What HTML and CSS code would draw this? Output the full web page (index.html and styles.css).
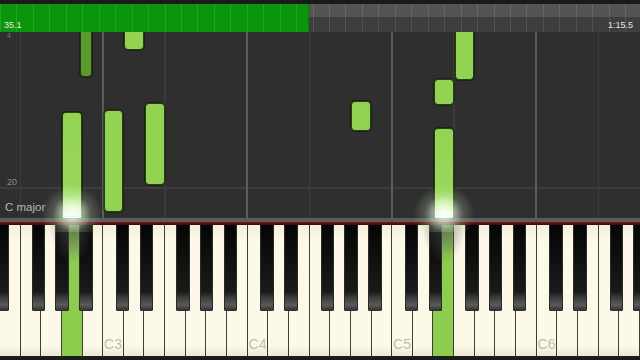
FILE: index.html
```html
<!DOCTYPE html>
<html lang="en">
<head>
  <meta charset="UTF-8">
  <meta name="viewport" content="width=device-width, initial-scale=1.0">
  <title>Piano Roll</title>
  <link rel="stylesheet" href="styles.css">
</head>
<body>
  <div class="screen">
    <div class="progress">
      <span class="time">35.1</span>
      <span class="time">1:15.5</span>
    </div>
    <div class="roll" id="roll">
      <span class="measure measure-top">4</span>
      <span class="measure measure-20">20</span>
      <span class="key-sig">C major</span>
    </div>
    <div class="rail"></div>
    <div class="keyboard" id="keyboard"></div>
  </div>
  <script src="script.js"></script>
</body>
</html>
```

FILE: styles.css
```css
body {
    margin: 0;
    background-color: #2f2f2f;
    font-family: "Liberation Sans", Arial, sans-serif;
}
.screen {
    width: 640px;
    height: 360px;
    display: flex;
    flex-direction: column;
    overflow: hidden;
}

/* song position bar */
.progress {
    box-sizing: border-box;
    height: 32px;
    border-top: 4px solid #1b1b1b;
    padding: 0 7px 2px 4px;
    display: flex;
    align-items: flex-end;
    justify-content: space-between;
    background:
        repeating-linear-gradient(to right, rgba(255, 255, 255, 0.1) 0 1px, transparent 1px 16.45px),
        linear-gradient(to right, #0a960a 0 308px, #087a08 308px 309px, transparent 309px),
        linear-gradient(#545454 0 45%, #3e3e3e 45%);
}
.time {
    font-size: 9px;
    line-height: 10px;
    color: #e6e6e6;
}

/* falling notes */
.roll {
    flex: 1;
    position: relative;
    z-index: 2;
    clip-path: inset(0 0 -40px 0);
    background-color: #2f2f2f;
    background-image:
        repeating-linear-gradient(to right, transparent 0 102px, #5c5c5c 102px 104px, transparent 104px 144.5px),
        repeating-linear-gradient(to right, transparent 0 20px, #3b3b3b 20px 21.5px, transparent 21.5px 144.5px),
        linear-gradient(to bottom, transparent 0 155px, #3d3d3d 155px 157px, transparent 157px);
}
.measure {
    position: absolute;
    left: 7px;
    font-size: 9px;
    color: #8a8a8a;
}
.measure-top {
    top: 0;
    font-size: 7px;
    color: #777;
}
.measure-20 {
    top: 145px;
}
.key-sig {
    position: absolute;
    left: 5px;
    top: 169px;
    font-size: 11.5px;
    color: #b8b8b8;
}
.note {
    position: absolute;
    box-sizing: border-box;
    border: 1px solid #24420f;
    border-radius: 4px;
    background: #92d352;
    box-shadow: 0 0 0 1px rgba(0, 0, 0, 0.35);
}
.note.sharp {
    background: #5c9a2c;
    border-color: #1d3a0b;
}
.note.playing {
    border-bottom: none;
    border-radius: 4px 4px 0 0;
    background: linear-gradient(to bottom, #92d352 0, #9ad85c 70%, #c9f0a4 88%, #f2fde8 100%);
}
.glow {
    position: absolute;
    width: 64px;
    height: 48px;
    bottom: -14px;
    background: radial-gradient(ellipse at 50% 62%, rgba(255, 255, 255, 0.95) 0, rgba(240, 255, 230, 0.65) 20%, rgba(200, 240, 180, 0.22) 42%, transparent 68%);
}

/* strip above the keys */
.rail {
    height: 3px;
    border-top: 4px solid #5b5b5b;
    background: linear-gradient(#7a1515, #3a0808);
}

/* keyboard */
.keyboard {
    height: 131px;
    position: relative;
    display: flex;
    border-bottom: 4px solid #1c1c1c;
    background: #1c1c1c;
}
.white-key {
    flex: 0 0 auto;
    width: 20.645px;
    box-sizing: border-box;
    border-right: 1px solid #3e3d36;
    background: linear-gradient(#f3efdc 0, #fdf9e9 12%, #fdf9e9 92%, #ece8d6 100%);
    display: flex;
    align-items: flex-end;
    justify-content: center;
}
.white-key.pressed {
    background: linear-gradient(#6b9a40 0, #8ccd4d 22%, #8ccd4d 100%);
}
.key-label {
    font-size: 14px;
    color: #c2beac;
    padding-bottom: 4px;
}
.black-key {
    position: absolute;
    top: 0;
    width: 13.5px;
    height: 86px;
    border-radius: 0 0 2px 2px;
    background: linear-gradient(to bottom, #050505 0, #1a1a1a 78%, #3a3a3a 84%, #5a5a5a 93%, #2c2c2c 100%);
    box-shadow: inset 1px 0 0 #2a2a2a, inset -1px 0 0 #2a2a2a;
}
.key-haze {
    position: absolute;
    top: -2px;
    width: 44px;
    height: 40px;
    background: radial-gradient(ellipse at 50% 0, rgba(90, 90, 90, 0.55) 0, rgba(90, 90, 90, 0.25) 45%, transparent 72%);
}
```

FILE: script.js
```js
// keyboard starts on E2, 31 white keys across the screen
const KEY_W = 640 / 31;
const WHITE = ['E', 'F', 'G', 'A', 'B', 'C', 'D'];
const SHARP_OFFSET = { C: -1.5, D: 2, F: -3, G: 0, A: 3.5 };
const PRESSED = [3, 21];

// [white key index, sharp?, top, bottom, playing] in roll coordinates
const NOTES = [
    [3, true, -10, 45],
    [6, false, -10, 18],
    [3, false, 80, 186, true],
    [5, false, 78, 180],
    [7, false, 71, 153],
    [17, false, 69, 99],
    [21, false, 47, 73],
    [22, false, -10, 48],
    [21, false, 96, 186, true]
];

const keyboard = document.getElementById('keyboard');
const roll = document.getElementById('roll');

function sharpCenter(boundary, name) {
    return boundary + SHARP_OFFSET[name];
}

for (let i = 0; i < 31; i++) {
    const name = WHITE[i % 7];
    const key = document.createElement('div');
    key.className = 'white-key';
    if (PRESSED.includes(i)) key.classList.add('pressed');
    if (name === 'C') {
        const label = document.createElement('span');
        label.className = 'key-label';
        label.textContent = 'C' + (2 + Math.floor((i + 2) / 7));
        key.appendChild(label);
    }
    keyboard.appendChild(key);
}

// D#2 sits right on the left edge
const sharps = [sharpCenter(0, 'D')];
for (let i = 0; i < 31; i++) {
    const name = WHITE[i % 7];
    if (name in SHARP_OFFSET) sharps.push(sharpCenter((i + 1) * KEY_W, name));
}
sharps.forEach(center => {
    const key = document.createElement('div');
    key.className = 'black-key';
    key.style.left = (center - 6.75) + 'px';
    keyboard.appendChild(key);
});

PRESSED.forEach(i => {
    const haze = document.createElement('div');
    haze.className = 'key-haze';
    haze.style.left = ((i + 0.5) * KEY_W - 22) + 'px';
    keyboard.appendChild(haze);
});

NOTES.forEach(([i, sharp, top, bottom, playing]) => {
    const note = document.createElement('div');
    note.className = 'note';
    let left, width;
    if (sharp) {
        const name = WHITE[i % 7];
        left = sharpCenter((i + 1) * KEY_W, name) - 6;
        width = 12;
        note.classList.add('sharp');
    } else {
        left = i * KEY_W + 0.5;
        width = KEY_W - 1;
    }
    if (playing) note.classList.add('playing');
    note.style.left = left + 'px';
    note.style.width = width + 'px';
    note.style.top = top + 'px';
    note.style.height = (bottom - top) + 'px';
    roll.appendChild(note);

    if (playing) {
        const glow = document.createElement('div');
        glow.className = 'glow';
        glow.style.left = (left + width / 2 - 32) + 'px';
        roll.appendChild(glow);
    }
});
```
